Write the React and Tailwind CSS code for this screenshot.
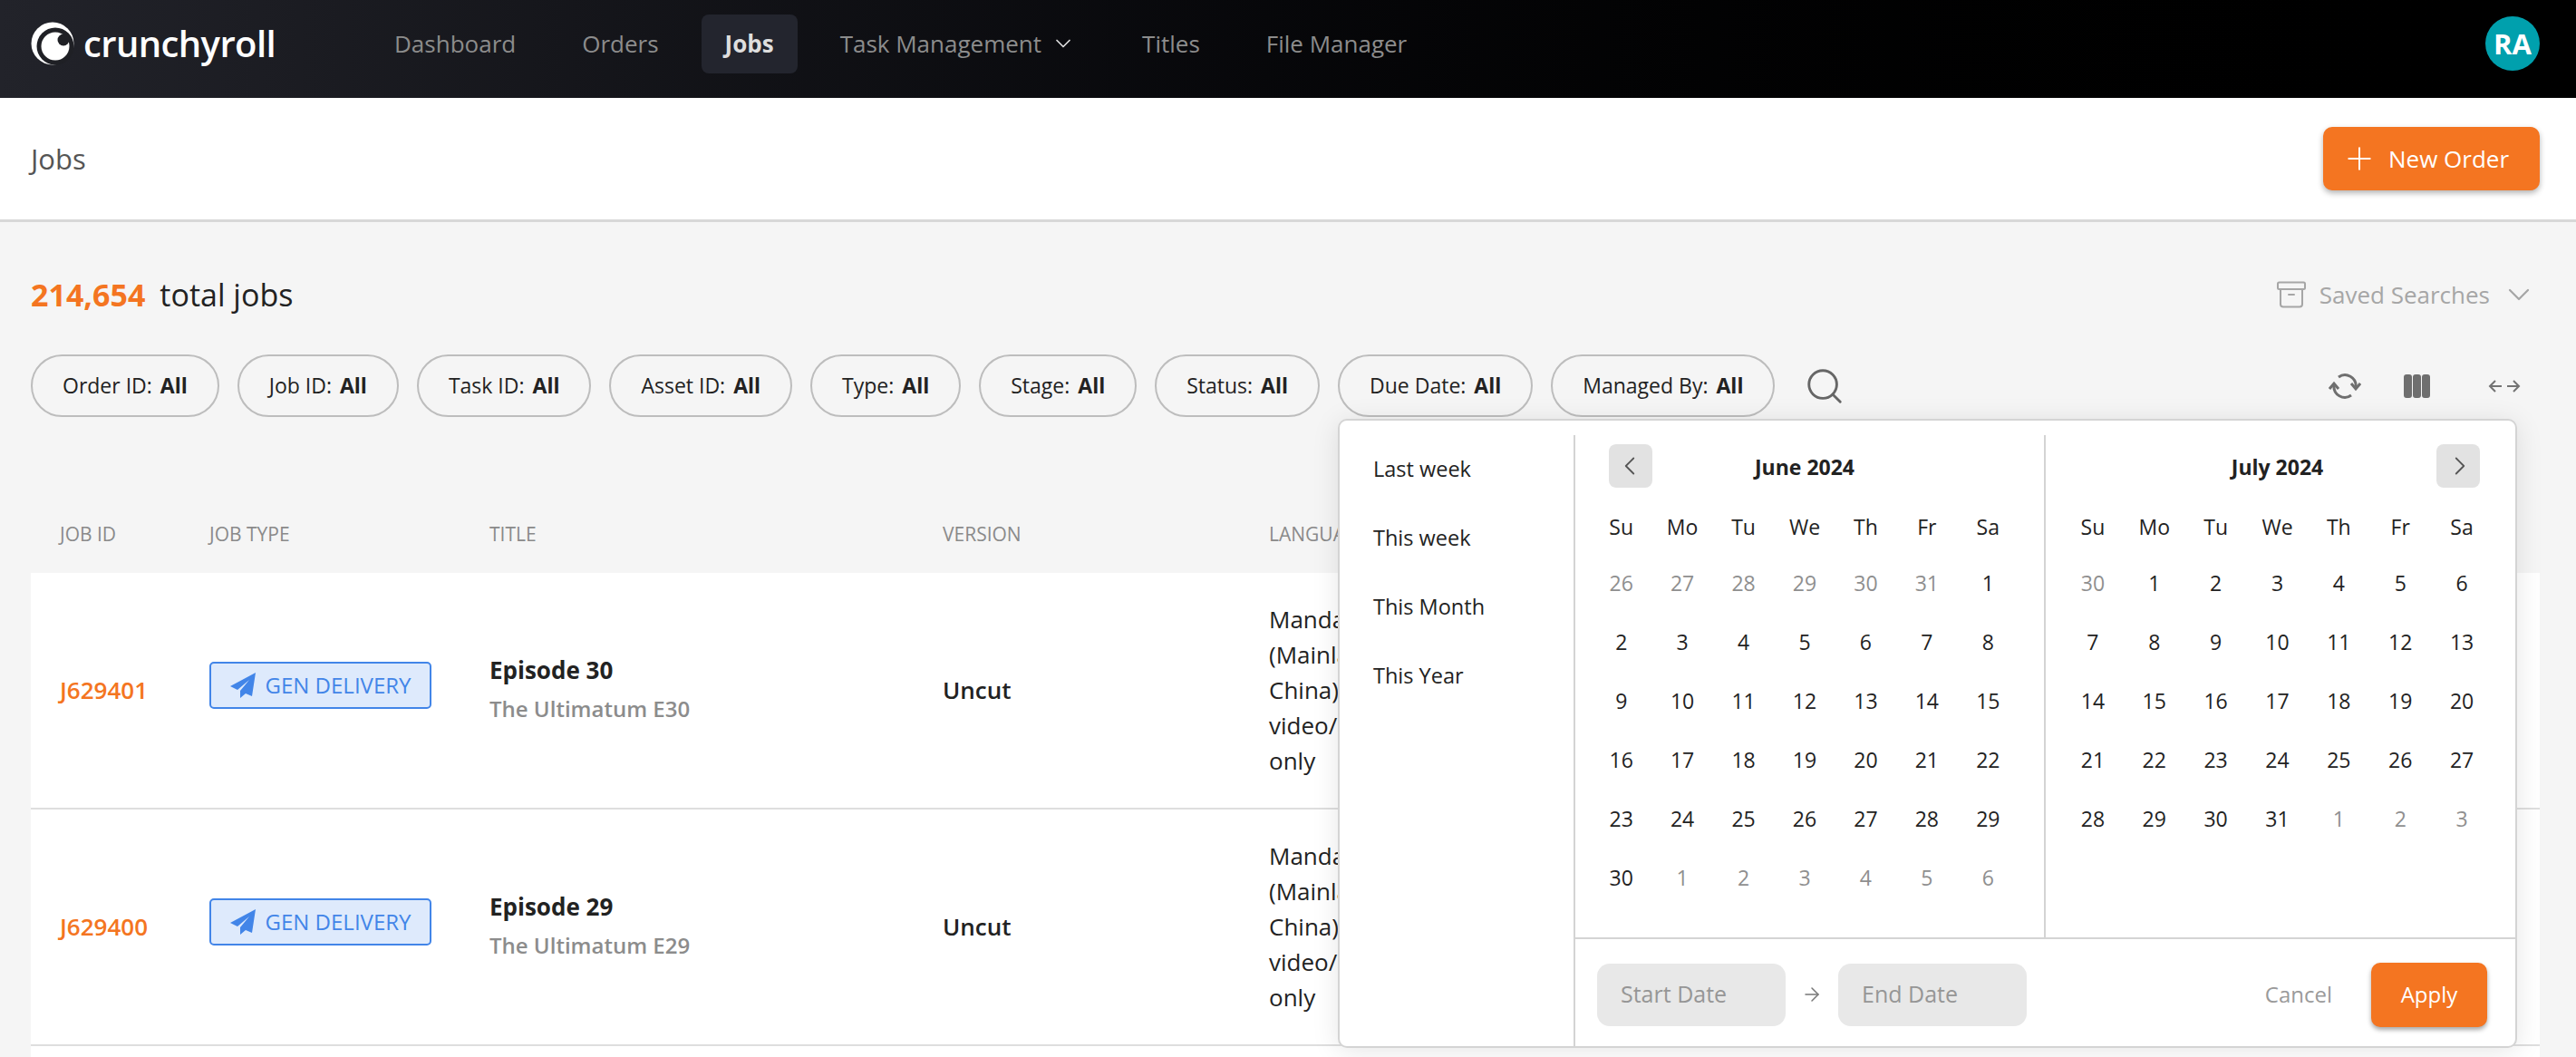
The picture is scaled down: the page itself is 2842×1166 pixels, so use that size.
import { ChevronDown, ChevronLeft, ChevronRight, Plus, ArrowRight, Search, Archive } from 'lucide-react';

const navItems = ['Dashboard', 'Orders', 'Jobs', 'Task Management', 'Titles', 'File Manager'];
const filters = ['Order ID', 'Job ID', 'Task ID', 'Asset ID', 'Type', 'Stage', 'Status', 'Due Date', 'Managed By'];
const weekDays = ['Su', 'Mo', 'Tu', 'We', 'Th', 'Fr', 'Sa'];
const june = [
    [26, 27, 28, 29, 30, 31], Array.from({ length: 30 }, (_, i) => i + 1), [1, 2, 3, 4, 5, 6],
];
const july = [
    [30], Array.from({ length: 31 }, (_, i) => i + 1), [1, 2, 3],
];
const rows = [
    { id: 'J629401', title: 'Episode 30', sub: 'The Ultimatum E30' },
    { id: 'J629400', title: 'Episode 29', sub: 'The Ultimatum E29' },
];

const Logo = () => (
    <div className="flex items-center w-[375px] h-[48px]">
        <svg width="48" height="48" viewBox="0 0 48 48" className="shrink-0">
            <circle cx="24" cy="24" r="23.5" fill="#fff" />
            <circle cx="27" cy="27" r="20.5" fill="#1f2025" />
            <circle cx="27" cy="27" r="15.5" fill="#fff" />
            <circle cx="36" cy="20" r="6.5" fill="#1f2025" />
        </svg>
        <span className="ml-[10px] font-['Open_Sans',sans-serif] font-semibold text-[40px] leading-[48px] tracking-[-0.6px] text-white">crunchyroll</span>
    </div>
);

const PaperPlane = () => (
    <svg width="28" height="28" viewBox="0 0 28 28" fill="#4285e8" className="shrink-0">
        <path d="M28 0 L0 15 L8 19 L21 8 L11 20 L11 28 L17 23 L24 26 Z" />
    </svg>
);

const RefreshIcon = () => (
    <svg width="36" height="30" viewBox="0 0 36 30" fill="none" stroke="#6f6f6f" strokeWidth="3">
        <path d="M6 14a12 12 0 0 0 19 11" />
        <path d="M30 16a12 12 0 0 0-19-11" />
        <path d="M1 18l5-6 5 6" />
        <path d="M25 12l5 6 5-6" />
    </svg>
);

const ColumnsIcon = () => (
    <div className="flex gap-[1px]">
        <div className="w-[9px] h-[26px] rounded-[3px] bg-[#6f6f6f]" />
        <div className="w-[9px] h-[26px] rounded-[3px] bg-[#6f6f6f]" />
        <div className="w-[9px] h-[26px] rounded-[3px] bg-[#6f6f6f]" />
    </div>
);

const ExpandIcon = () => (
    <svg width="36" height="14" viewBox="0 0 36 14" fill="none" stroke="#737373" strokeWidth="2">
        <path d="M15 7H2M8 1L2 7l6 6" />
        <path d="M21 7h13M28 1l6 6-6 6" />
    </svg>
);

const Month = ({ title, data, nav }) => (
    <div className={`relative w-[517px] pt-[12px] shrink-0 ${nav === 'prev' ? 'pl-[17px] pr-[28px]' : 'pl-[18px] pr-[24px]'}`}>
        {nav === 'prev' && (
            <button className="absolute left-[37px] top-[10px] w-[48px] h-[48px] rounded-[8px] bg-[#e2e2e2] flex items-center justify-center">
                <ChevronLeft size={34} strokeWidth={1.25} color="#555" className="-ml-[2px]" />
            </button>
        )}
        {nav === 'next' && (
            <button className="absolute right-[38px] top-[10px] w-[48px] h-[48px] rounded-[8px] bg-[#e2e2e2] flex items-center justify-center">
                <ChevronRight size={34} strokeWidth={1.25} color="#555" className="ml-[3px]" />
            </button>
        )}
        <div className="h-[46px] flex items-center justify-center font-bold text-[23px] text-[#222]">{title}</div>
        <div className="grid grid-cols-7 mt-[14px] text-[23px] text-[#222]">
            {weekDays.map((d) => (
                <div key={d} className="h-[59px] flex items-center justify-center">{d}</div>
            ))}
            {data[0].map((d) => (
                <div key={`p${d}`} className="h-[65px] flex items-center justify-center text-[#8f8f8f]">{d}</div>
            ))}
            {data[1].map((d) => (
                <div key={`c${d}`} className="h-[65px] flex items-center justify-center">{d}</div>
            ))}
            {data[2].map((d) => (
                <div key={`n${d}`} className="h-[65px] flex items-center justify-center text-[#8f8f8f]">{d}</div>
            ))}
        </div>
    </div>
);

const DatePopover = () => (
    <div className="absolute left-[1476px] top-[462px] w-[1301px] h-[694px] bg-white rounded-[10px] border-2 border-[#d4d4d4] shadow-[0_4px_30px_rgba(0,0,0,0.10)] flex">
        <div className="w-[258px] shrink-0 pt-[16px] pl-[37px] text-[23.5px] text-[#222]">
            {['Last week', 'This week', 'This Month', 'This Year'].map((p) => (
                <div key={p} className="h-[76px] flex items-center">{p}</div>
            ))}
        </div>
        <div className="flex-1 flex flex-col border-l-2 border-[#d4d4d4] mt-[16px]">
            <div className="h-[556px] flex border-b-2 border-[#d4d4d4]">
                <Month title="June 2024" data={june} nav="prev" />
                <div className="border-l-2 border-[#d4d4d4]">
                    <Month title="July 2024" data={july} nav="next" />
                </div>
            </div>
            <div className="flex items-center pl-[24px] pr-[31px] pt-[4px] flex-1">
                <div className="w-[208px] h-[69px] rounded-[14px] bg-[#e8e8e8] flex items-center pl-[26px] text-[25px] text-[#969696]">Start Date</div>
                <div className="w-[58px] flex justify-center"><ArrowRight size={24} strokeWidth={1.5} color="#777" /></div>
                <div className="w-[208px] h-[69px] rounded-[14px] bg-[#e8e8e8] flex items-center pl-[26px] text-[25px] text-[#969696]">End Date</div>
                <div className="ml-auto text-[24px] text-[#9a9a9a] mr-[43px]">Cancel</div>
                <button className="w-[128px] h-[71px] rounded-[10px] bg-[#f47521] text-white text-[24px] shadow-[0_3px_5px_rgba(0,0,0,0.35)]">Apply</button>
            </div>
        </div>
    </div>
);

export default function App() {
    return (
        <div className="relative w-[2842px] h-[1166px] overflow-hidden bg-[#f5f5f5] font-['Open_Sans',sans-serif]">
            {/* bar atas */}
            <header className="h-[108px] bg-gradient-to-r from-[#22232a] to-[#000000] flex items-center pl-[34px] pr-[40px] pb-[12px]">
                <Logo />
                <nav className="flex items-center gap-[21px]">
                    {navItems.map((item) => (
                        <div
                            key={item}
                            className={`h-[65px] rounded-[8px] px-[26px] flex items-center text-[26px] ${item === 'Jobs' ? 'bg-[#23252e] text-[#dedede] font-bold' : 'text-[#8c8c8c]'}`}
                        >
                            {item}
                            {item === 'Task Management' && <ChevronDown size={28} strokeWidth={1.5} className="ml-[10px] text-[#dddddd]" />}
                        </div>
                    ))}
                </nav>
                <div className="ml-auto w-[60px] h-[60px] rounded-full bg-[#00a0ad] flex items-center justify-center text-white font-bold text-[31px]">RA</div>
            </header>

            {/* judul halaman */}
            <div className="h-[137px] bg-white border-b-[3px] border-[#d8d8d8] flex items-center justify-between pl-[34px] pr-[40px]">
                <h1 className="text-[31px] text-[#555]">Jobs</h1>
                <button className="w-[239px] h-[70px] rounded-[10px] bg-[#f47521] text-white text-[26px] flex items-center pl-[20px] gap-[12px] shadow-[0_3px_6px_rgba(0,0,0,0.3)]">
                    <Plus size={40} strokeWidth={1.2} />
                    New Order
                </button>
            </div>

            <main className="pl-[34px] pr-[40px]">
                <div className="h-[100px] mt-[30px] flex items-center justify-between">
                    <div className="text-[34px] text-[#222]">
                        <span className="font-bold text-[#f47521] mr-[16px]">214,654</span>total jobs
                    </div>
                    <div className="flex items-center text-[26px] text-[#a6a6a6] pr-[3px]">
                        <Archive size={36} strokeWidth={1.35} className="mr-[13px]" />
                        Saved Searches
                        <ChevronDown size={40} strokeWidth={1.35} className="ml-[12px]" />
                    </div>
                </div>

                <div className="flex items-center justify-between mt-[16px]">
                    <div className="flex items-center gap-[20px]">
                        {filters.map((f) => (
                            <div key={f} className="h-[69px] rounded-[35px] border-2 border-[#bdbdbd] px-[33px] flex items-center text-[23px] text-[#222]">
                                {f}:<span className="font-bold ml-[9px]">All</span>
                            </div>
                        ))}
                        <Search size={46} strokeWidth={1.5} color="#666" className="ml-[12px]" />
                    </div>
                    <div className="flex items-center pr-[21px]">
                        <RefreshIcon />
                        <div className="ml-[47px] mr-[64px]"><ColumnsIcon /></div>
                        <ExpandIcon />
                    </div>
                </div>

                {/* tabel */}
                <div className="grid grid-cols-[197px_309px_500px_360px_1fr] h-[112px] items-center text-[21px] text-[#8a8a8a] mt-[60px] pt-[28px]">
                    <div className="pl-[32px]">JOB ID</div>
                    <div>JOB TYPE</div>
                    <div>TITLE</div>
                    <div>VERSION</div>
                    <div>LANGUAGE</div>
                </div>
                {rows.map((r) => (
                    <div key={r.id} className="grid grid-cols-[197px_309px_500px_360px_1fr] h-[261px] items-center bg-white border-b-2 border-[#dedede]">
                        <div className="pl-[32px] text-[26px] font-semibold text-[#f47521]">{r.id}</div>
                        <div>
                            <div className="w-[245px] h-[52px] -mt-[12px] rounded-[5px] border-2 border-[#4285e8] bg-[#deeafc] flex items-center justify-center gap-[11px] text-[24px] text-[#4285e8]">
                                <PaperPlane />
                                GEN DELIVERY
                            </div>
                        </div>
                        <div className="-mt-[4px]">
                            <div className="text-[26px] font-bold text-[#222]">{r.title}</div>
                            <div className="text-[24px] font-semibold text-[#8c8c8c] mt-[5px]">{r.sub}</div>
                        </div>
                        <div className="text-[26px] font-semibold text-[#222]">Uncut</div>
                        <div className="text-[26px] leading-[39px] text-[#222] w-[170px]">
                            Mandarin (Mainland China) video/audio only
                        </div>
                    </div>
                ))}
                <div className="h-[20px] bg-white" />
            </main>

            <DatePopover />
        </div>
    );
}
